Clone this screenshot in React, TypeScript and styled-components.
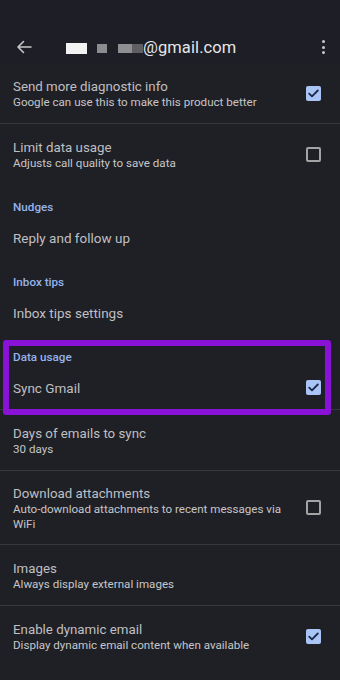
import React from "react";
import styled, { createGlobalStyle } from "styled-components";

const GlobalStyle = createGlobalStyle`
  html, body {
    margin: 0;
    padding: 0;
    background-color: #1f2025;
  }
  * {
    box-sizing: border-box;
  }
`;

const Screen = styled.div`
  width: 340px;
  height: 680px;
  overflow: hidden;
  background-color: #1f2025;
  font-family: Roboto, "Liberation Sans", sans-serif;
  display: flex;
  flex-direction: column;
`;

const Toolbar = styled.div`
  height: 64px;
  padding: 30px 12px 0 14px;
  display: flex;
  align-items: flex-start;
  background-color: #1e1e27;
`;

const ToolbarInner = styled.div`
  height: 34px;
  width: 100%;
  display: flex;
  align-items: center;
`;

const BackButton = styled.div`
  width: 20px;
  height: 20px;
  display: flex;
  align-items: center;
  justify-content: center;
  margin-right: 32px;
`;

const Account = styled.div`
  flex: 1;
  display: flex;
  align-items: center;
  color: #e6e6e8;
  font-size: 16.5px;
  letter-spacing: 0.1px;
`;

const Redact = styled.span<{ w: number; shade: string; gap: number }>`
  display: inline-block;
  width: ${(p) => p.w}px;
  height: ${(p) => (p.shade === "#f2f2f2" ? 11 : 9)}px;
  margin-right: ${(p) => p.gap}px;
  background: ${(p) => p.shade};
  margin-top: 2px;
`;

const Kebab = styled.div`
  width: 6px;
  display: flex;
  flex-direction: column;
  align-items: center;
  gap: 2.5px;
  margin-right: 2px;
`;

const Dot = styled.span`
  width: 3px;
  height: 3px;
  border-radius: 50%;
  background: #c9c9cc;
`;

const Row = styled.div<{ h: number }>`
  height: ${(p) => p.h}px;
  padding: 0 19px 0 13px;
  display: flex;
  align-items: center;
  justify-content: space-between;
  flex-shrink: 0;
`;

const TextBlock = styled.div`
  display: flex;
  flex-direction: column;
  min-width: 0;
  padding: 2px 14px 0 0;
`;

const Title = styled.div`
  color: #bfbfc2;
  font-size: 13.3px;
  line-height: 17px;
`;

const Subtitle = styled.div`
  color: #c6c6c9;
  font-size: 11.6px;
  line-height: 15.5px;
`;

const PlainItem = styled.div`
  color: #bfbfc2;
  font-size: 13.5px;
  line-height: 18px;
`;

const Divider = styled.div`
  height: 1px;
  background: #37383d;
  flex-shrink: 0;
`;

const Section = styled.div`
  position: relative;
  flex-shrink: 0;
`;

const SectionHeader = styled.div`
  height: 32px;
  padding: 14px 13px 0;
  color: #95b3ec;
  font-size: 11.7px;
  font-weight: 500;
  line-height: 18px;
`;

const Highlight = styled.div`
  position: absolute;
  top: 6px;
  left: 3px;
  right: 9px;
  bottom: -6px;
  border: 6px solid #8a12d6;
  border-radius: 3px;
  pointer-events: none;
`;

const Box = styled.div<{ checked?: boolean }>`
  width: 15px;
  height: 15px;
  flex-shrink: 0;
  border-radius: 2px;
  display: flex;
  align-items: center;
  justify-content: center;
  background: ${(p) => (p.checked ? "#a9c5f6" : "transparent")};
  border: ${(p) => (p.checked ? "none" : "2px solid #a3a3a6")};
`;

const Checkbox = ({ checked }: { checked?: boolean }) => (
  <Box checked={checked}>
    {checked && (
      <svg width="11" height="9" viewBox="0 0 11 9">
        <path
          d="M1.2 4.6 L4 7.3 L9.8 1.5"
          fill="none"
          stroke="#1a2744"
          strokeWidth="1.8"
          strokeLinecap="round"
          strokeLinejoin="round"
        />
      </svg>
    )}
  </Box>
);

interface ItemProps {
  title: string;
  subtitle?: string;
  height: number;
  checkbox?: "on" | "off";
}

const Item = ({ title, subtitle, height, checkbox }: ItemProps) => (
  <Row h={height}>
    <TextBlock>
      <Title>{title}</Title>
      {subtitle && <Subtitle>{subtitle}</Subtitle>}
    </TextBlock>
    {checkbox && <Checkbox checked={checkbox === "on"} />}
  </Row>
);

const SimpleSection = ({
  header,
  item,
  checkbox,
  highlight,
}: {
  header: string;
  item: string;
  checkbox?: "on" | "off";
  highlight?: boolean;
}) => (
  <Section>
    <SectionHeader>{header}</SectionHeader>
    <Row h={43}>
      <PlainItem>{item}</PlainItem>
      {checkbox && <Checkbox checked={checkbox === "on"} />}
    </Row>
    {highlight && <Highlight />}
  </Section>
);

const App = () => {
  return (
    <Screen>
      <GlobalStyle />
      <Toolbar>
        <ToolbarInner>
          <BackButton>
            <svg width="16" height="14" viewBox="0 0 16 14">
              <path
                d="M15 7 H2 M7.5 1.5 L2 7 L7.5 12.5"
                fill="none"
                stroke="#c6c6ca"
                strokeWidth="1.6"
                strokeLinecap="round"
                strokeLinejoin="round"
              />
            </svg>
          </BackButton>
          <Account>
            <Redact w={21} shade="#f2f2f2" gap={10} />
            <Redact w={10} shade="#8c8c90" gap={11} />
            <Redact w={14} shade="#8f8f93" gap={0} />
            <Redact w={11} shade="#5e5e63" gap={0} />
            <span>@gmail.com</span>
          </Account>
          <Kebab>
            <Dot />
            <Dot />
            <Dot />
          </Kebab>
        </ToolbarInner>
      </Toolbar>

      <Item
        title="Send more diagnostic info"
        subtitle="Google can use this to make this product better"
        height={59}
        checkbox="on"
      />
      <Divider />
      <Item
        title="Limit data usage"
        subtitle="Adjusts call quality to save data"
        height={60}
        checkbox="off"
      />

      <SimpleSection header="Nudges" item="Reply and follow up" />
      <SimpleSection header="Inbox tips" item="Inbox tips settings" />
      <SimpleSection
        header="Data usage"
        item="Sync Gmail"
        checkbox="on"
        highlight
      />
      <Divider />
      <Item title="Days of emails to sync" subtitle="30 days" height={60} />
      <Divider />
      <Item
        title="Download attachments"
        subtitle="Auto-download attachments to recent messages via WiFi"
        height={73}
        checkbox="off"
      />
      <Divider />
      <Item
        title="Images"
        subtitle="Always display external images"
        height={60}
      />
      <Divider />
      <Item
        title="Enable dynamic email"
        subtitle="Display dynamic email content when available"
        height={60}
        checkbox="on"
      />
    </Screen>
  );
};

export default App;
